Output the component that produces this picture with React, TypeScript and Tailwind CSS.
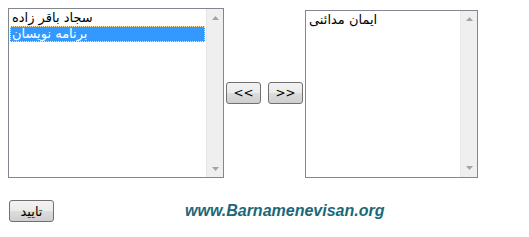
import React from 'react';

function ScrollBar() {
  return (
    <div className="w-[17px] h-full flex flex-col justify-between bg-[#efefef] border-l border-[#e6e6e6]">
      <div className="h-[17px] flex items-center justify-center">
        <svg width="7" height="4" viewBox="0 0 7 4">
          <path d="M3.5 0 L7 4 L0 4 Z" fill="#a4a4a4" />
        </svg>
      </div>
      <div className="h-[17px] flex items-center justify-center">
        <svg width="7" height="4" viewBox="0 0 7 4">
          <path d="M0 0 L7 0 L3.5 4 Z" fill="#a4a4a4" />
        </svg>
      </div>
    </div>
  );
}

function ListBox({ items, selected, className }: { items: string[]; selected?: number; className: string }) {
  return (
    <div className={`flex border border-[#82878f] bg-white ${className}`}>
      <div className="flex-1 p-px">
        {items.map((it, i) => (
          <div
            key={it}
            className={
              i === selected
                ? 'h-[16px] leading-[15px] px-[2px] bg-[#3399ff] text-white outline-1 outline-dotted outline-offset-[-1px] outline-[#ffe9b0]'
                : 'h-[16px] leading-[15px] px-[2px] text-black'
            }
          >
            {it}
          </div>
        ))}
      </div>
      <ScrollBar />
    </div>
  );
}

function WinButton({ children, className }: { children: React.ReactNode; className: string }) {
  return (
    <button
      className={`h-[22px] rounded-[3px] border border-[#707070] bg-[linear-gradient(#f2f2f2_0%,#ebebeb_50%,#dddddd_50%,#cfcfcf_100%)] text-[12px] text-black leading-none ${className}`}
    >
      {children}
    </button>
  );
}

export default function App() {
  return (
    <div className="w-[529px] h-[237px] bg-white pt-2 pl-2 font-['DejaVu_Sans',sans-serif] text-[13px]">
      <div className="flex items-center">
        <ListBox items={['سجاد باقر زاده', 'برنامه نویسان']} selected={1} className="w-[216px] h-[170px]" />
        <WinButton className="w-[35px] ml-[2px]">&lt;&lt;</WinButton>
        <WinButton className="w-[35px] ml-[7px]">&gt;&gt;</WinButton>
        <ListBox items={['ایمان مدائنی']} className="w-[173px] h-[168px] ml-[2px] mt-[1px]" />
      </div>
      <div className="flex items-center mt-[21px]">
        <WinButton className="w-[45px] ml-px text-[13px]">تایید</WinButton>
        <span className="ml-[131px] text-[16px] font-bold italic text-[#1b6878] font-['Liberation_Sans',sans-serif]">
          www.Barnamenevisan.org
        </span>
      </div>
    </div>
  );
}
